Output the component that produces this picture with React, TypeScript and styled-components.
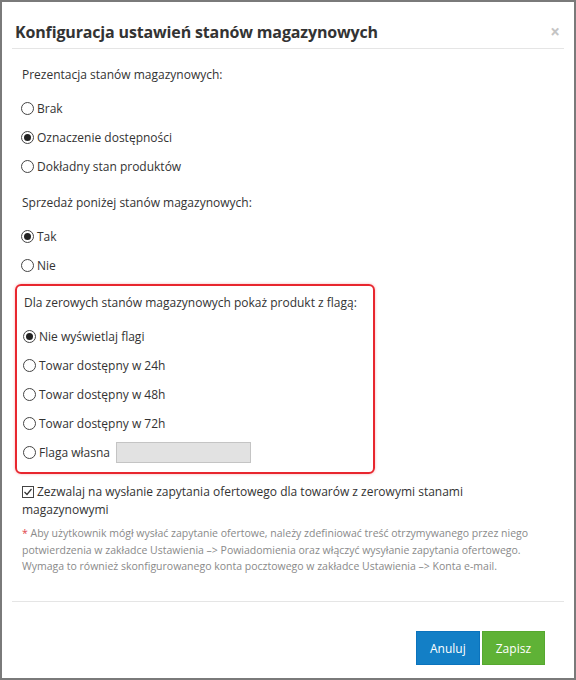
import styled, { createGlobalStyle } from "styled-components";

const GlobalStyle = createGlobalStyle`
    html, body {
        margin: 0;
        padding: 0;
        background: #fff;
    }
    body {
        font-family: "Open Sans", "Liberation Sans", sans-serif;
        color: #333;
    }
`;

const Modal = styled.div`
    box-sizing: border-box;
    width: 576px;
    height: 680px;
    border: 2px solid #7a7a7a;
    background: #fff;
    display: flex;
    flex-direction: column;
`;

const Header = styled.div`
    display: flex;
    align-items: center;
    justify-content: space-between;
    height: 46px;
    margin: 0 10px;
    padding: 0 4px 0 3px;
    border-bottom: 1px solid #e5e5e5;
`;

const Title = styled.h4`
    margin: 0;
    padding-top: 14px;
    font-size: 16px;
    font-weight: 700;
    color: #333;
    letter-spacing: -0.15px;
`;

const Close = styled.span`
    padding-top: 12px;
    font-size: 17px;
    color: #c4c4c4;
    font-weight: 700;
    line-height: 1;
`;

const Body = styled.div`
    padding: 16px 24px 0 19px;
    font-size: 12px;
`;

const Group = styled.div`
    & + & {
        margin-top: 12px;
    }
`;

const Label = styled.div`
    height: 20px;
    line-height: 20px;
    padding-left: 1px;
    margin-bottom: 9px;
    white-space: nowrap;
`;

const Row = styled.div`
    display: flex;
    align-items: center;
    height: 29px;
    gap: 3px;
`;

const Radio = styled.span<{ $checked?: boolean }>`
    box-sizing: border-box;
    width: 13px;
    height: 13px;
    border: 1px solid #444;
    border-radius: 50%;
    display: inline-flex;
    align-items: center;
    justify-content: center;
    flex-shrink: 0;
    &::after {
        content: "";
        width: 7px;
        height: 7px;
        border-radius: 50%;
        background: #222;
        display: ${(p) => (p.$checked ? "block" : "none")};
    }
`;

const FlagBox = styled.div`
    width: 360px;
    box-sizing: border-box;
    margin: 4px 0 0 -6px;
    padding: 7px 6px 5px 6px;
    border: 2px solid #e8262e;
    border-radius: 6px;
    box-shadow: 0 0 3px rgba(232, 38, 46, 0.35);
`;

const FlagInput = styled.input`
    box-sizing: border-box;
    width: 135px;
    height: 21px;
    margin-left: 3px;
    border: 1px solid #c4c4c4;
    background: #e2e2e2;
`;

const CheckRow = styled.div`
    margin-top: 9px;
    line-height: 18px;
    padding-left: 1px;
`;

const CheckBox = styled.span`
    box-sizing: border-box;
    width: 12px;
    height: 12px;
    margin-right: 3px;
    border: 1px solid #444;
    display: inline-flex;
    align-items: center;
    justify-content: center;
    vertical-align: -1px;
`;

const Note = styled.p`
    margin: 6px 0 0 1px;
    font-size: 10.5px;
    line-height: 16.5px;
    color: #8a8a8a;
`;

const Star = styled.span`
    color: #e0454b;
`;

const Footer = styled.div`
    margin: auto 10px 0 10px;
    border-top: 1px solid #e5e5e5;
    height: 77px;
    display: flex;
    justify-content: flex-end;
    align-items: flex-start;
    padding: 29px 19px 0 0;
    box-sizing: border-box;
    gap: 2px;
`;

const Button = styled.button<{ $variant: "primary" | "success" }>`
    height: 34px;
    margin: 0;
    padding: 0 13px;
    border: 1px solid ${(p) => (p.$variant === "primary" ? "#0b73bd" : "#56a82f")};
    background: ${(p) => (p.$variant === "primary" ? "#137fc6" : "#5fb236")};
    color: #fff;
    font-family: "Open Sans", "Liberation Sans", sans-serif;
    font-size: 12px;
    cursor: pointer;
`;

const flagOptions = [
    { label: "Nie wyświetlaj flagi", checked: true },
    { label: "Towar dostępny w 24h" },
    { label: "Towar dostępny w 48h" },
    { label: "Towar dostępny w 72h" },
];

export default function App() {
    return (
        <>
            <GlobalStyle />
            <Modal>
                <Header>
                    <Title>Konfiguracja ustawień stanów magazynowych</Title>
                    <Close>×</Close>
                </Header>
                <Body>
                    <Group>
                        <Label>Prezentacja stanów magazynowych:</Label>
                        <Row><Radio />Brak</Row>
                        <Row><Radio $checked />Oznaczenie dostępności</Row>
                        <Row><Radio />Dokładny stan produktów</Row>
                    </Group>
                    <Group>
                        <Label>Sprzedaż poniżej stanów magazynowych:</Label>
                        <Row><Radio $checked />Tak</Row>
                        <Row><Radio />Nie</Row>
                    </Group>
                    <FlagBox>
                        <Label>Dla zerowych stanów magazynowych pokaż produkt z flagą:</Label>
                        {flagOptions.map((o) => (
                            <Row key={o.label}>
                                <Radio $checked={o.checked} />
                                {o.label}
                            </Row>
                        ))}
                        <Row>
                            <Radio />
                            Flaga własna
                            <FlagInput type="text" />
                        </Row>
                    </FlagBox>
                    <CheckRow>
                        <CheckBox>
                            <svg width="10" height="10" viewBox="0 0 10 10">
                                <path d="M1.5 5 L4 7.5 L8.5 2" fill="none" stroke="#333" strokeWidth="1.2" />
                            </svg>
                        </CheckBox>
                        Zezwalaj na wysłanie zapytania ofertowego dla towarów z zerowymi stanami magazynowymi
                    </CheckRow>
                    <Note>
                        <Star>*</Star> Aby użytkownik mógł wysłać zapytanie ofertowe, należy zdefiniować treść otrzymywanego przez niego potwierdzenia w zakładce Ustawienia –&gt; Powiadomienia oraz włączyć wysyłanie zapytania ofertowego. Wymaga to również skonfigurowanego konta pocztowego w zakładce Ustawienia –&gt; Konta e-mail.
                    </Note>
                </Body>
                <Footer>
                    <Button $variant="primary">Anuluj</Button>
                    <Button $variant="success">Zapisz</Button>
                </Footer>
            </Modal>
        </>
    );
}
